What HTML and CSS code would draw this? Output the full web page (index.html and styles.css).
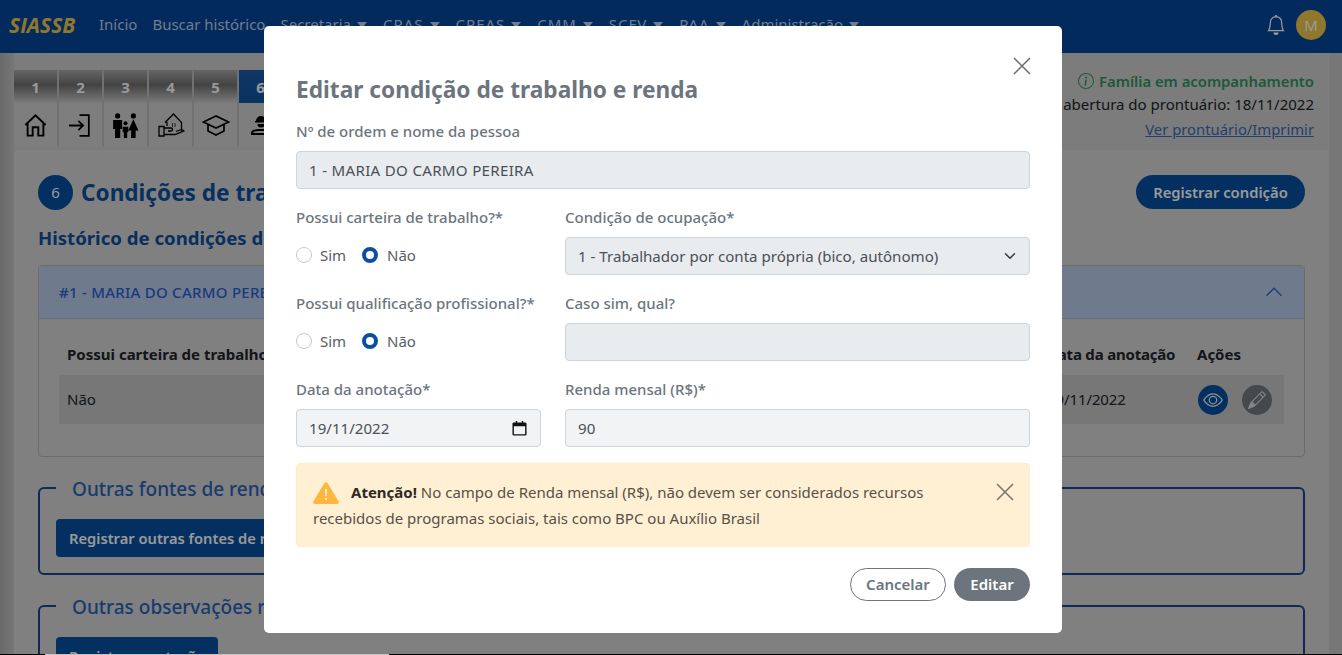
FILE: index.html
```html
<!DOCTYPE html>
<html lang="pt-BR">
<head>
<meta charset="utf-8">
<title>SIASSB</title>
<link rel="stylesheet" href="styles.css">
</head>
<body>
<header class="navbar">
  <span class="brand">SIASSB</span>
  <nav class="nav">
    <a>Início</a><a>Buscar histórico</a>
    <a class="drop">Secretaria</a><a class="drop caps">CRAS</a><a class="drop caps">CREAS</a><a class="drop caps">CMM</a><a class="drop caps">SCFV</a><a class="drop caps">PAA</a><a class="drop">Administração</a>
  </nav>
  <svg class="bell" viewBox="0 0 16 16" width="20" height="20" fill="#fff"><path d="M8 16a2 2 0 0 0 2-2H6a2 2 0 0 0 2 2zM8 1.918l-.797.161A4.002 4.002 0 0 0 4 6c0 .628-.134 2.197-.459 3.742-.16.767-.376 1.566-.663 2.258h10.244c-.287-.692-.502-1.49-.663-2.258C12.134 8.197 12 6.628 12 6a4.002 4.002 0 0 0-3.203-3.92L8 1.917zM14.22 12c.223.447.481.801.78 1H1c.299-.199.557-.553.78-1C2.68 10.2 3 6.88 3 6c0-2.42 1.72-4.44 4.005-4.901a1 1 0 1 1 1.99 0A5.002 5.002 0 0 1 13 6c0 .88.32 4.2 1.22 6z"/></svg>
  <span class="avatar">M</span>
</header>

<main class="page">
  <div class="top">
    <div class="tabs">
      <div class="tab"><b>1</b><span><svg viewBox="0 0 24 24" width="27" height="27" class="ico"><path d="M3 11.500 12 3l9 8.500M5 10v11h4.500v-7.500h5V21H19V10"/></svg></span></div>
      <div class="tab"><b>2</b><span><svg viewBox="0 0 24 24" width="25" height="25" class="ico"><path d="M11 2h9v20h-9M1 12h13M10 7.500l4.500 4.500-4.500 4.500"/></svg></span></div>
      <div class="tab"><b>3</b><span><svg viewBox="0 0 24 24" width="27" height="27" class="solid"><circle cx="5" cy="3.500" r="2.300"/><circle cx="19" cy="3.500" r="2.300"/><circle cx="12" cy="10" r="1.800"/><path d="M1 7h8v8H7.300v8H2.700v-8H1zM19 6.500l4.500 10H21v6.500h-4v-6.500h-2.500zM9.500 13h5v5h-1v5h-3v-5h-1z"/></svg></span></div>
      <div class="tab"><b>4</b><span><svg viewBox="0 0 28 26" width="28" height="26" class="ico thin"><path d="M8 10.500 16.500 2l8 8.500V21M10 10v4M15 12h1M17.500 12h1M15 14h1M17.500 14h1M2 14.500h5v9.500H2zM7 16h7c2 0 2 3 0 3h-3m-4 3.500h11l9-3.500c-1-1.500-2.500-1.500-4-1l-4 1.500"/></svg></span></div>
      <div class="tab"><b>5</b><span><svg viewBox="0 0 28 24" width="28" height="24" class="ico"><path d="M14 3 1.500 9 14 15l12.500-6zM6 12v6l8 4 8-4v-6"/></svg></span></div>
      <div class="tab active"><b>6</b><span><svg viewBox="0 0 24 24" width="24" height="24" class="solid"><path d="M7 8a5 5 0 0 1 10 0h1v1.500H6V8zM8.500 11h7a3.500 3.500 0 0 1-7 0z"/><path d="M2 22v-1.500C2 17 5 16 12 16s10 1 10 4.500V22zm2-2h16c-.5-1.500-3-2-8-2s-7.500.5-8 2z"/></svg></span></div>
    </div>
    <div class="status">
      <div class="fam"><svg viewBox="0 0 16 16" width="16" height="16" fill="currentColor"><path d="M8 15A7 7 0 1 1 8 1a7 7 0 0 1 0 14zm0 1A8 8 0 1 0 8 0a8 8 0 0 0 0 16z"/><path d="m8.930 6.588-2.290.287-.082.380.450.083c.294.070.352.176.288.469l-.738 3.468c-.194.897.105 1.319.808 1.319.545 0 1.178-.252 1.465-.598l.088-.416c-.200.176-.492.246-.686.246-.275 0-.375-.193-.304-.533L8.930 6.588zM9 4.500a1 1 0 1 1-2 0 1 1 0 0 1 2 0z"/></svg> Família em acompanhamento</div>
      <div class="opened">Data de abertura do prontuário: 18/11/2022</div>
      <a>Ver prontuário/Imprimir</a>
    </div>
  </div>

  <section class="card">
    <div class="title-row">
      <span class="step">6</span>
      <h1>Condições de trabalho e renda</h1>
      <button class="btn-reg">Registrar condição</button>
    </div>
    <h2>Histórico de condições de trabalho e renda</h2>
    <div class="accordion">
      <div class="acc-head">
        <span>#1 - MARIA DO CARMO PEREIRA</span>
        <svg viewBox="0 0 16 16" width="20" height="20" fill="none" stroke="#3266c8" stroke-width="1.100"><path d="M2 11l6-6 6 6"/></svg>
      </div>
      <div class="acc-body">
        <div class="tr th"><span>Possui carteira de trabalho?</span><span class="col-date">Data da anotação</span><span class="col-act">Ações</span></div>
        <div class="tr td"><span>Não</span><span class="col-date">19/11/2022</span><span class="col-act icons">
          <i class="round eye"><svg viewBox="0 0 16 16" width="20" height="20" fill="#eef0f6"><path d="M16 8s-3-5.500-8-5.500S0 8 0 8s3 5.500 8 5.500S16 8 16 8zM1.173 8a13.133 13.133 0 0 1 1.660-2.043C4.120 4.668 5.880 3.500 8 3.500c2.120 0 3.879 1.168 5.168 2.457A13.133 13.133 0 0 1 14.828 8c-.058.087-.122.183-.195.288-.335.480-.830 1.120-1.465 1.755C11.879 11.332 10.119 12.500 8 12.500c-2.120 0-3.879-1.168-5.168-2.457A13.134 13.134 0 0 1 1.172 8z"/><path d="M8 5.500a2.500 2.500 0 1 0 0 5 2.500 2.500 0 0 0 0-5zM4.500 8a3.500 3.500 0 1 1 7 0 3.500 3.500 0 0 1-7 0z"/></svg></i>
          <i class="round pen"><svg viewBox="0 0 16 16" width="18" height="18" fill="#dcdcdc"><path d="M12.146.146a.5.5 0 0 1 .708 0l3 3a.5.5 0 0 1 0 .708l-10 10a.5.5 0 0 1-.168.110l-5 2a.5.5 0 0 1-.650-.650l2-5a.5.5 0 0 1 .110-.168l10-10zM11.207 2.500 13.500 4.793 14.793 3.500 12.500 1.207 11.207 2.500zm1.586 3L10.500 3.207 4 9.707V10h.500a.5.5 0 0 1 .500.500v.500h.500a.5.5 0 0 1 .500.500v.500h.293l6.500-6.500z"/></svg></i>
        </span></div>
      </div>
    </div>
    <fieldset class="box">
      <legend>Outras fontes de renda</legend>
      <button class="btn-box">Registrar outras fontes de renda</button>
    </fieldset>
    <fieldset class="box">
      <legend>Outras observações relevantes</legend>
      <button class="btn-box">Registrar anotação</button>
    </fieldset>
  </section>
</main>

<div class="backdrop">
  <div class="edge"></div>
  <div class="modal" role="dialog">
    <div class="modal-head">
      <h3>Editar condição de trabalho e renda</h3>
      <svg class="close" viewBox="0 0 18 18" width="18" height="18" stroke="#6c6c6c" stroke-width="1.500"><path d="M1 1l16 16M17 1 1 17"/></svg>
    </div>
    <form class="form">
      <div class="field wide">
        <label>Nº de ordem e nome da pessoa</label>
        <div class="control name">1 - MARIA DO CARMO PEREIRA</div>
      </div>
      <div class="field">
        <label>Possui carteira de trabalho?*</label>
        <div class="radios"><i class="radio"></i><span>Sim</span><i class="radio on"></i><span>Não</span></div>
      </div>
      <div class="field">
        <label>Condição de ocupação*</label>
        <div class="control between">1 - Trabalhador por conta própria (bico, autônomo)<svg viewBox="0 0 16 16" width="12" height="12" fill="none" stroke="#343a40" stroke-width="2" stroke-linecap="round" stroke-linejoin="round"><path d="m2 5 6 6 6-6"/></svg></div>
      </div>
      <div class="field">
        <label>Possui qualificação profissional?*</label>
        <div class="radios"><i class="radio"></i><span>Sim</span><i class="radio on"></i><span>Não</span></div>
      </div>
      <div class="field">
        <label>Caso sim, qual?</label>
        <div class="control"></div>
      </div>
      <div class="field">
        <label>Data da anotação*</label>
        <div class="control light between">19/11/2022<svg viewBox="0 0 16 16" width="15" height="15" fill="#111"><path d="M2 1.500h2V0h1.500v1.500h5V0H12v1.500h2a1.500 1.500 0 0 1 1.500 1.500v11a1.500 1.500 0 0 1-1.500 1.500H2A1.500 1.500 0 0 1 .5 14V3A1.500 1.500 0 0 1 2 1.500zM2 5.500V14h12V5.500z"/></svg></div>
      </div>
      <div class="field">
        <label>Renda mensal (R$)*</label>
        <div class="control light">90</div>
      </div>
    </form>
    <div class="alert">
      <div class="alert-text">
        <svg class="warn" viewBox="0 0 26 22" width="26" height="22"><path d="M11.300 1.200a2 2 0 0 1 3.400 0l10.800 18a1.800 1.800 0 0 1-1.700 2.800H2.200a1.800 1.800 0 0 1-1.700-2.800z" fill="#ffb63f"/><path d="M12 7h2l-.3 7h-1.400zM12 16h2v2h-2z" fill="#fff3dc"/></svg><strong>Atenção!</strong> No campo de Renda mensal (R$), não devem ser considerados recursos recebidos de programas sociais, tais como BPC ou Auxílio Brasil
      </div>
      <svg class="alert-close" viewBox="0 0 18 18" width="18" height="18" stroke="#7b7468" stroke-width="1.600"><path d="M1 1l16 16M17 1 1 17"/></svg>
    </div>
    <div class="actions">
      <button class="btn-cancel">Cancelar</button>
      <button class="btn-edit">Editar</button>
    </div>
  </div>
</div>
</body>
</html>
```
FILE: styles.css
```css
* { box-sizing: border-box; }
html, body { height: 100%; margin: 0; overflow: hidden; }
body {
  font-family: "Noto Sans", "Open Sans", sans-serif;
  font-size: 15px;
  color: #212529;
  background: linear-gradient(90deg, #b0b0b0, #c6c6c6 14px);
}
.navbar {
  height: 53px;
  background: #05469a;
  display: flex;
  align-items: center;
  padding: 0 16px 3px 9px;
}
.brand {
  color: #ecc850;
  font: italic 700 21px "Open Sans", sans-serif;
  width: 90px;
}
.nav { display: flex; flex: 1; color: #bcd0e8; font-size: 15px; margin-top: -2px; }
.nav a { margin-right: 15px; white-space: nowrap; }
.nav .drop { margin-right: 16px; }
.caps { letter-spacing: .96px; }
.drop::after {
  content: "";
  display: inline-block;
  margin-left: 6px;
  vertical-align: 2px;
  border-top: 6px solid currentColor;
  border-left: 5px solid transparent;
  border-right: 5px solid transparent;
}
.bell { margin-right: 10px; }
.avatar {
  width: 30px; height: 30px; border-radius: 50%;
  background: #eec64e; color: #fff;
  display: flex; align-items: center; justify-content: center;
  font-size: 15px;
}
.page { padding: 17px 0 0; margin: 0 13px 0 14px; background: #cfcfcf; height: 602px; }
.top { display: flex; justify-content: space-between; height: 80px; }
.tabs { display: flex; }
.tab { width: 45px; height: 77px; display: flex; flex-direction: column; border-right: 2px solid #bcbcbc; }
.tab b {
  height: 33px; color: #fff; font-size: 15px;
  display: flex; align-items: center; justify-content: center;
  background: linear-gradient(#aaa, #707070 45%, #cdcdcd);
}
.tab span { height: 44px; display: flex; align-items: center; justify-content: center; background: #d2d2d2; }
.tab.active b { background: linear-gradient(#1a5ba8, #12559e); color: #fff; }
.ico { fill: none; stroke: #000; stroke-width: 1.700; }
.thin { stroke-width: 1.300; }
.solid { fill: #000; }
.status { text-align: right; line-height: 24px; margin-top: -1px; padding-right: 15px; width: 300px; white-space: nowrap; display: flex; flex-direction: column; align-items: flex-end; }
.opened { margin: -1px 0 1px; }
.fam { color: #2f9660; font-weight: 600; font-size: 14.800px; display: flex; align-items: center; gap: 5px; margin-right: 0; }
.status a { color: #3c6ab8; text-decoration: underline; font-size: 14.800px; }
.card { background: #d5d5d5; height: 600px; border-radius: 4px; padding: 25px 24px; }
.title-row { display: flex; align-items: center; height: 34px; }
.step {
  width: 35px; height: 35px; border-radius: 50%; background: #0550a0; color: #fff;
  display: flex; align-items: center; justify-content: center; font-size: 15px; margin-right: 8px;
}
h1 { margin: 0; font-size: 22.600px; font-weight: 700; color: #0d4f9e; flex: 1; white-space: nowrap; }
.btn-reg {
  background: #0550a0; color: #fff; border: 0; height: 34px; width: 169px; border-radius: 17px;
  font: 600 14.800px "Noto Sans", sans-serif;
}
h2 { margin: 17px 0 15px; font-size: 18.600px; line-height: 24px; font-weight: 700; color: #0d4f9e; }
.accordion { border: 1px solid #b4b4b4; border-radius: 4px; height: 192px; }
.acc-head {
  height: 53px; background: #b9cdec; border-bottom: 1px solid #a4b8d8; color: #2a62d0; font-weight: 500; font-size: 15px; letter-spacing: .25px;
  display: flex; justify-content: space-between; align-items: center; padding: 0 20px;
}
.acc-body { padding: 19px 20px; }
.tr { display: flex; align-items: center; padding-left: 8px; padding-right: 8px; }
.th { height: 32px; font-weight: 700; font-size: 15px; margin-bottom: 5px; }
.th .col-date { letter-spacing: -.2px; }
.td { height: 49px; background: #c6c6c6; padding-bottom: 2px; }
.td .col-date { letter-spacing: -.1px; }
.td .icons { margin-bottom: -2px; }
.col-date { margin-left: auto; width: 150px; white-space: nowrap; }
.col-act { width: 79px; }
.icons { display: flex; gap: 14px; flex: none; padding-left: 1px; }
.round { flex: none; width: 30px; height: 30px; border-radius: 50%; display: flex; align-items: center; justify-content: center; }
.eye { background: #0550a0; }
.pen { background: #767b7e; }
.box {
  border: 2px solid #194693; border-radius: 6px; margin: 18px 0 0; padding: 0 16px; height: 100px;
}
legend { font-size: 19px; color: #2b62b8; padding: 2px 16px 0; line-height: 24px; white-space: nowrap; font-weight: 500; }
.btn-box {
  display: block; margin-top: 18px; height: 38px; padding: 0 13px; border: 0; border-radius: 4px; background: #0550a0; color: #fff;
  font: 600 14.700px "Noto Sans", sans-serif;
}
.backdrop {
  position: fixed; inset: 0; background: rgba(0,0,0,.4);
  display: flex; justify-content: center; align-items: flex-start; padding: 26px 16px 0 0;
}
.edge { position: absolute; left: 0; right: 0; bottom: 0; height: 1px; background: linear-gradient(90deg, #000 45px, #c4c4c4 45px, #c4c4c4 389px, #000 389px); }
.modal {
  position: relative; width: 798px; height: 607px; background: #fff; border-radius: 5px; padding: 0 32px;
}
.modal-head { height: 94px; display: flex; justify-content: space-between; padding-top: 49px; }
h3 { margin: 0; font-size: 22.700px; line-height: 30px; font-weight: 700; color: #6c757d; }
.close { margin: -18px 0 0 0; position: relative; left: 1px; }
.form { display: grid; grid-template-columns: 245px 465px; column-gap: 24px; }
.field { height: 86px; }
.wide { grid-column: 1 / -1; }
label { display: block; height: 22px; line-height: 22px; margin-bottom: 9px; color: #6c757d; font-weight: 500; font-size: 15px; white-space: nowrap; }
.control {
  height: 38px; background: #e9ecef; border: 1px solid #ced4da; border-radius: 4px; padding: 0 12px;
  display: flex; align-items: center; color: #495057; font-size: 15.100px;
}
.name { letter-spacing: .3px; }
.light { background: #f1f3f5; }
.between { justify-content: space-between; }
.between svg { margin-right: 1px; }
.radios { display: flex; align-items: center; color: #565e64; height: 30px; margin-top: 12px; }
.radios span { margin: 0 0 0 8px; width: 42px; }
.radios span:last-child { margin-left: 9px; }
.radio { width: 16px; height: 16px; border-radius: 50%; border: 1px solid #c4c8cc; background: #fff; }
.radio.on { border: 4.500px solid #0a4fa3; }
.alert {
  height: 84px; margin-top: -1px; background: #fff0d4; border: 1px solid #ffecc8; border-radius: 4px;
  padding: 15px 16px 16px; display: flex; justify-content: space-between; color: #57504a;
  line-height: 26px; font-size: 15px;
}
.alert strong { color: #2e2a26; }
.alert-text { width: 640px; }
.warn { vertical-align: -6px; margin-right: 12px; }
.alert-close { margin: 4px -1px 0 0; flex: none; }
.actions { display: flex; justify-content: flex-end; gap: 8px; margin-top: 21px; }
.actions button { height: 33px; border-radius: 17px; padding: 0 0 2px; font: 600 15px "Noto Sans", sans-serif; }
.btn-cancel { width: 96px; background: #fff; border: 1px solid #6c757d; color: #6c757d; }
.btn-edit { width: 76px; background: #6c757d; border: 0; color: #fff; }
```
